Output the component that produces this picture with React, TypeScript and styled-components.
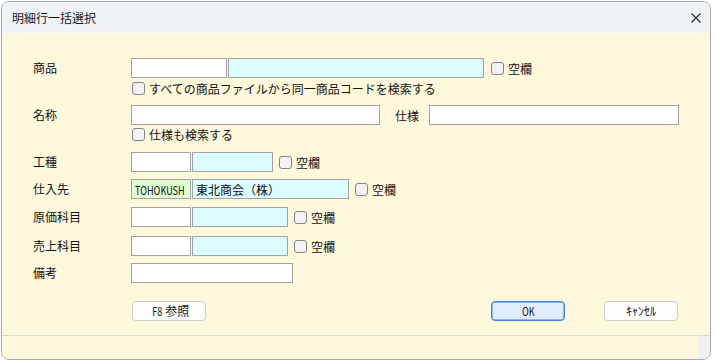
import React from 'react';
import styled, { createGlobalStyle } from 'styled-components';

const GlobalStyle = createGlobalStyle`
  html, body {
    margin: 0;
    padding: 0;
    background: #ffffff;
  }
  body {
    font-family: "Noto Sans CJK JP", "Noto Sans", sans-serif;
    color: #111111;
  }
`;

// ウィンドウ枠
const Window = styled.div`
  box-sizing: border-box;
  width: 710px;
  height: 359px;
  margin: 1px 0 0 1px;
  border: 1px solid #a9a9a9;
  border-radius: 8px;
  overflow: hidden;
  display: flex;
  flex-direction: column;
  background: #fff8dc;
`;

const TitleBar = styled.div`
  flex: none;
  height: 31px;
  display: flex;
  align-items: center;
  justify-content: space-between;
  padding: 0 9px 0 10px;
  background: #eef3f8;
  font-size: 12px;
  color: #1a1a1a;
`;

const CloseButton = styled.button`
  border: none;
  background: transparent;
  padding: 0;
  width: 10px;
  height: 10px;
  display: flex;
  cursor: pointer;
`;

const Body = styled.div`
  flex: 1;
  padding: 25px 0 0 31px;
  display: flex;
  flex-direction: column;
`;

const Row = styled.div<{ $gap?: number; $indent?: number; $h?: number }>`
  display: flex;
  align-items: center;
  height: ${(p) => p.$h ?? 20}px;
  margin-top: ${(p) => p.$gap ?? 0}px;
  padding-left: ${(p) => p.$indent ?? 0}px;
`;

const Label = styled.div`
  flex: none;
  width: 98px;
  font-size: 12px;
  line-height: 20px;
`;

const InlineLabel = styled.span<{ $ml: number }>`
  margin-left: ${(p) => p.$ml}px;
  font-size: 12px;
`;

type Tone = 'white' | 'cyan' | 'green';

const toneColor: Record<Tone, string> = {
  white: '#ffffff',
  cyan: '#ddfcff',
  green: '#e0fdd2',
};

const Field = styled.input<{ $w: number; $tone?: Tone; $ml?: number }>`
  box-sizing: border-box;
  flex: none;
  width: ${(p) => p.$w}px;
  height: 20px;
  margin: 0 0 0 ${(p) => p.$ml ?? 0}px;
  padding: 0 3px;
  border: 1px solid #a2a2a2;
  border-radius: 0;
  background: ${(p) => toneColor[p.$tone ?? 'white']};
  font-family: "Noto Sans CJK JP", sans-serif;
  font-size: 12px;
  color: #111111;
  outline: none;
`;

// 半角コード表示用の欄 (細い書体を再現するため div で描く)
const CodeBox = styled.div<{ $w: number; $tone?: Tone }>`
  box-sizing: border-box;
  flex: none;
  width: ${(p) => p.$w}px;
  height: 20px;
  padding-left: 3px;
  border: 1px solid #a2a2a2;
  background: ${(p) => toneColor[p.$tone ?? 'white']};
  display: flex;
  align-items: center;
  overflow: hidden;
  white-space: nowrap;
`;

const Narrow = styled.span<{ $origin?: string }>`
  display: inline-block;
  font-family: "Noto Sans CJK JP", sans-serif;
  font-size: 12px;
  transform: scaleX(0.76);
  transform-origin: ${(p) => p.$origin ?? 'left'} center;
`;

const Wide = styled.span`
  margin-left: 3px;
`;

const Check = styled.input.attrs({ type: 'checkbox' })<{ $ml?: number }>`
  appearance: none;
  box-sizing: border-box;
  flex: none;
  width: 13px;
  height: 13px;
  margin: 0 0 0 ${(p) => p.$ml ?? 0}px;
  border: 1px solid #858585;
  border-radius: 3px;
  background: #f3f3f3;
`;

const CheckText = styled.span`
  margin-left: 4px;
  font-size: 12px;
`;

const ButtonRow = styled.div`
  display: flex;
  align-items: center;
  margin-top: 18px;
  height: 20px;
`;

const Button = styled.button<{ $primary?: boolean; $ml: number }>`
  box-sizing: border-box;
  flex: none;
  width: 74px;
  height: 20px;
  margin-left: ${(p) => p.$ml}px;
  padding: 0;
  border: 1px solid ${(p) => (p.$primary ? '#3d84d6' : '#cfcfcf')};
  box-shadow: ${(p) => (p.$primary ? 'inset 0 0 0 0.5px #3d84d6' : 'none')};
  border-radius: 4px;
  background: ${(p) => (p.$primary ? '#e0ecf9' : '#fdfdfd')};
  font-family: "Noto Sans CJK JP", sans-serif;
  font-size: 12px;
  line-height: 18px;
  color: #111111;
  display: flex;
  align-items: center;
  justify-content: center;
`;

const StatusBar = styled.div`
  flex: none;
  height: 23px;
  border-top: 1px solid #d9d9d9;
  display: flex;
`;

const StatusPanel = styled.div`
  flex: 1;
  background: #fff8dc;
`;

const Grip = styled.div`
  flex: none;
  width: 12px;
  background: #f0f0f0;
`;

const CloseIcon = () => (
  <svg width="10" height="10" viewBox="0 0 10 10">
    <path d="M0.5 0.5 L9.5 9.5 M9.5 0.5 L0.5 9.5" stroke="#2b2b2b" strokeWidth="1.1" />
  </svg>
);

interface BlankProps {
  ml?: number;
}

// 空欄チェック
const Blank = ({ ml = 6 }: BlankProps) => (
  <>
    <Check $ml={ml} />
    <CheckText>空欄</CheckText>
  </>
);

const App = () => {
  return (
    <>
      <GlobalStyle />
      <Window>
        <TitleBar>
          <span>明細行一括選択</span>
          <CloseButton aria-label="閉じる">
            <CloseIcon />
          </CloseButton>
        </TitleBar>
        <Body>
          <Row>
            <Label>商品</Label>
            <Field $w={96} />
            <Field $w={256} $tone="cyan" $ml={1} />
            <Blank ml={7} />
          </Row>
          <Row $gap={1} $h={18} $indent={99}>
            <Check />
            <CheckText>すべての商品ファイルから同一商品コードを検索する</CheckText>
          </Row>

          <Row $gap={8}>
            <Label>名称</Label>
            <Field $w={249} />
            <InlineLabel $ml={15}>仕様</InlineLabel>
            <Field $w={250} $ml={10} />
          </Row>
          <Row $h={18} $indent={99} $gap={0}>
            <Check />
            <CheckText>仕様も検索する</CheckText>
          </Row>

          <Row $gap={9}>
            <Label>工種</Label>
            <Field $w={60} />
            <Field $w={81} $tone="cyan" $ml={1} />
            <Blank />
          </Row>
          <Row $gap={7}>
            <Label>仕入先</Label>
            <CodeBox $w={60} $tone="green">
              <Narrow>TOHOKUSH</Narrow>
            </CodeBox>
            <Field $w={157} $tone="cyan" $ml={1} defaultValue="東北商会（株）" />
            <Blank />
          </Row>
          <Row $gap={8}>
            <Label>原価科目</Label>
            <Field $w={60} />
            <Field $w={96} $tone="cyan" $ml={1} />
            <Blank />
          </Row>
          <Row $gap={9}>
            <Label>売上科目</Label>
            <Field $w={60} />
            <Field $w={96} $tone="cyan" $ml={1} />
            <Blank />
          </Row>
          <Row $gap={7}>
            <Label>備考</Label>
            <Field $w={162} />
          </Row>

          <ButtonRow>
            <Button $ml={99}>
              <Narrow $origin="right">F8</Narrow>
              <Wide>参照</Wide>
            </Button>
            <Button $ml={285} $primary>
              <Narrow $origin="center">OK</Narrow>
            </Button>
            <Button $ml={39}>ｷｬﾝｾﾙ</Button>
          </ButtonRow>
        </Body>
        <StatusBar>
          <StatusPanel />
          <Grip />
        </StatusBar>
      </Window>
    </>
  );
};

export default App;
